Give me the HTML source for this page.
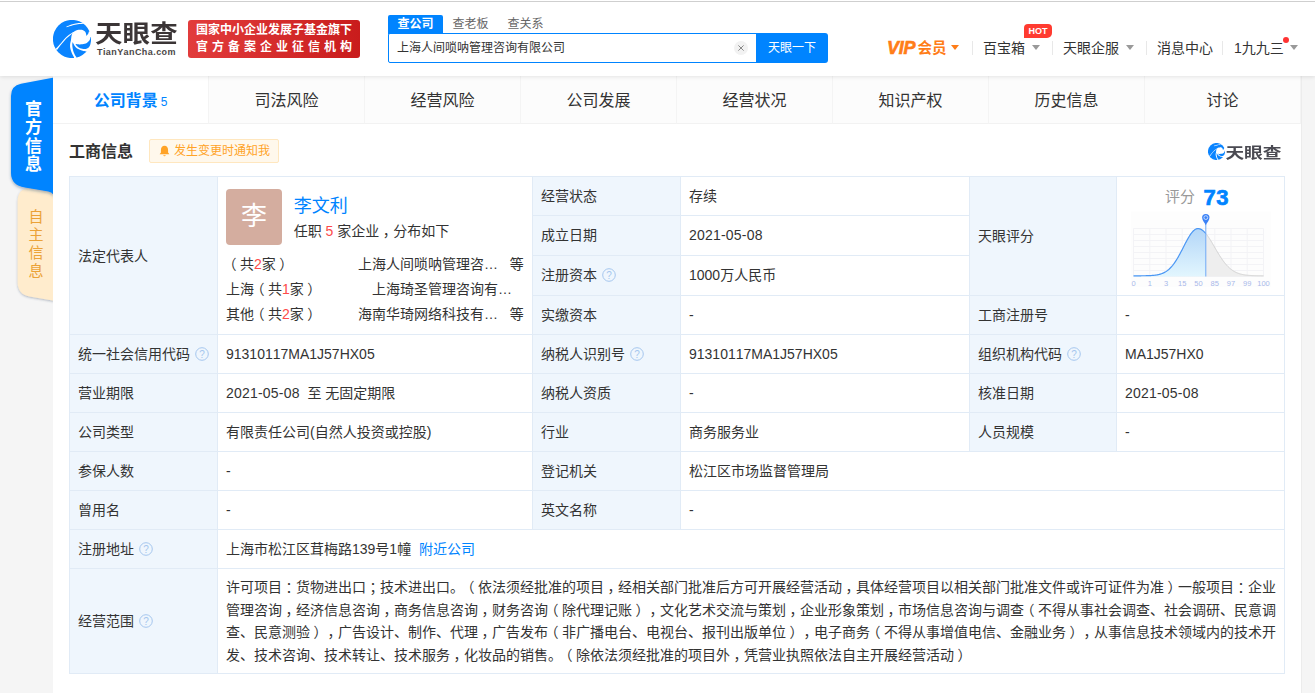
<!DOCTYPE html>
<html lang="zh-CN">
<head>
<meta charset="utf-8">
<title>上海人间唢呐管理咨询有限公司 - 天眼查</title>
<style>
*{box-sizing:border-box;margin:0;padding:0}
html,body{width:1315px;height:693px;overflow:hidden}
body{position:relative;background:#f5f5f5;color:#333;font-family:"Liberation Sans","Noto Sans CJK SC",sans-serif;font-size:14px;line-height:1;text-spacing-trim:space-all;font-kerning:none}
.abs{position:absolute}
#hd{position:absolute;left:0;top:0;width:1315px;height:76px;background:#fff;box-shadow:0 1px 4px rgba(0,0,0,.10);z-index:5}
#topline{position:absolute;left:0;top:1px;width:1315px;height:1px;background:#cfcfcf}
#logo{position:absolute;left:53px;top:20px;width:38px;height:38px}
#logotxt{position:absolute;left:95px;top:18px;font-size:27.5px;font-weight:700;color:#3b3536;letter-spacing:.1px;line-height:32px;transform-origin:0 50%;transform:scale(1,.86);white-space:nowrap}
#logosub{position:absolute;left:97px;top:46.5px;font-size:9px;font-weight:bold;color:#4a4646;letter-spacing:.42px;line-height:10px;white-space:nowrap}
#badge{position:absolute;left:188px;top:20px;width:172px;height:38px;border-radius:3px;background:linear-gradient(90deg,#e23c3c,#c91c1c);color:#fff;font-weight:bold;font-size:12px;line-height:16.5px;padding:2.3px 0 0 8px;white-space:nowrap}
#badge .l2{letter-spacing:4px}
.stab{position:absolute;top:15px;height:19px;width:55px;text-align:center;font-size:12px;line-height:18px;color:#666}
.stab.on{background:#0084ff;color:#fff;font-weight:bold;border-radius:2px 2px 0 0}
#sbox{position:absolute;left:388px;top:33px;width:369px;height:30px;border:1px solid #0084ff;border-radius:2px 0 0 2px;background:#fff;font-size:12px;line-height:29px;padding-left:8px;color:#333}
#sclr{position:absolute;left:734px;top:41px;width:14px;height:14px;border-radius:7px;background:#f2f2f2}
#sbtn{position:absolute;left:756px;top:33px;width:72px;height:30px;background:#0084ff;border-radius:0 3px 3px 0;color:#fff;font-size:12px;line-height:30px;text-align:center}
.nv{position:absolute;top:41px;font-size:14px;line-height:14px;color:#333;white-space:nowrap}
.sep{position:absolute;top:41px;width:1px;height:14px;background:#e8e8e8}
.car{position:absolute;top:45px;width:0;height:0;border-left:4.3px solid transparent;border-right:4.3px solid transparent;border-top:5.2px solid #999}
#side{position:absolute;left:0;top:70px;z-index:6}
.vt{position:absolute;z-index:7;text-align:center;width:18px}
#main{position:absolute;left:53px;top:76px;width:1249px;height:617px;background:#fff;border-right:1px solid #ececec}
.tab{position:absolute;top:0;width:156px;height:48px;background:#fcfcfc;border-bottom:1px solid #f2f2f2;border-right:1px solid #f4f4f4;text-align:center;font-size:16px;line-height:49px;color:#333}
.tab.on{background:#fff;color:#0084ff;font-weight:bold}
.tab.on small{font-size:12px;font-weight:normal;margin-left:3px}
#h2{position:absolute;left:69px;top:142.5px;font-size:16px;font-weight:bold;color:#333;line-height:18px;white-space:nowrap}
#notify{position:absolute;left:149px;top:139px;width:130px;height:24px;border:1px solid #ffe7bf;background:#fff8ec;border-radius:2px;color:#ffa327;font-size:12px;line-height:22px;padding-left:24px;white-space:nowrap}
#slogo{position:absolute;left:1208.3px;top:143.2px;width:17px;height:17px}
#slogotxt{position:absolute;left:1225.4px;top:142.2px;font-size:18.7px;font-weight:700;color:#4a4a52;line-height:22px;white-space:nowrap;transform-origin:0 50%;transform:scale(1,.8)}
.c{position:absolute;border:1px solid #e1ebf6;background:#fff;font-size:14px;line-height:20px;color:#333;padding-left:8px;padding-top:8.7px;display:flex;align-items:flex-start;white-space:nowrap}
.c.m{align-items:center;padding-top:0}
.c.l{background:#eff6fd}
#scope{line-height:22.5px;white-space:nowrap}
.q{display:inline-block;width:14px;height:14px;margin-left:5px;vertical-align:-2px}
.n{letter-spacing:.2px}
.pc{font-feature-settings:"halt" 1;margin:0 3.5px}
.red{color:#fd4a4a}
.blue{color:#0084ff}
#avatar{position:absolute;left:226px;top:189px;width:56px;height:56px;border-radius:4px;background:#d4ad9f;color:#fff;font-size:26px;line-height:54px;text-align:center}
#pname{position:absolute;left:293.7px;top:196px;font-size:18px;line-height:20px;color:#0084ff;white-space:nowrap}
#pdesc{position:absolute;left:293.7px;top:221.7px;font-size:14px;line-height:18px;white-space:nowrap}
.pl,.pr,.pe{position:absolute;font-size:14px;line-height:20px;white-space:nowrap}
.pl{left:226px}
.pr{left:358px}
.pe{left:509.7px}
</style>
</head>
<body>
<div id="main">
<div class="tab on" style="left:0px">公司背景<small>5</small></div>
<div class="tab" style="left:156px">司法风险</div>
<div class="tab" style="left:312px">经营风险</div>
<div class="tab" style="left:468px">公司发展</div>
<div class="tab" style="left:624px">经营状况</div>
<div class="tab" style="left:780px">知识产权</div>
<div class="tab" style="left:936px">历史信息</div>
<div class="tab" style="left:1092px">讨论</div>
</div>
<div id="h2">工商信息</div>
<div id="notify"><svg class="abs" style="left:7.5px;top:4.5px" width="13" height="13" viewBox="0 0 12 12"><path d="M6 .8 C3.9 .8 2.7 2.5 2.7 4.6 L2.7 7 L1.5 8.6 L10.5 8.6 L9.3 7 L9.3 4.6 C9.3 2.5 8.1 .8 6 .8 Z M4.8 9.5 A1.25 1.25 0 0 0 7.2 9.5 Z" fill="#ffa327"/></svg>发生变更时通知我</div>
<svg id="slogo" viewBox="0 0 38 38"><circle cx="19" cy="19" r="19.1" fill="#0a84ff"/>
<path d="M20.2 12.1C20.60 11.87 21.88 11.04 22.60 10.70C23.32 10.36 23.88 10.20 24.50 10.05C25.12 9.90 25.62 9.85 26.30 9.80C26.98 9.75 27.90 9.65 28.60 9.75C29.30 9.85 29.93 10.11 30.50 10.40C31.07 10.69 31.60 11.03 32.00 11.50C32.40 11.97 32.65 12.47 32.90 13.20C33.15 13.93 33.40 15.45 33.50 15.90C33.68 15.68 34.28 15.05 34.60 14.60C34.92 14.15 35.18 13.70 35.40 13.20C35.62 12.70 35.82 11.87 35.90 11.60L40 11L40 17.6L37.6 17C37.48 17.40 37.27 18.63 36.90 19.40C36.53 20.17 35.92 21.02 35.40 21.60C34.88 22.18 34.42 22.53 33.80 22.90C33.18 23.27 32.45 23.57 31.70 23.80C30.95 24.03 30.10 24.15 29.30 24.25C28.50 24.35 27.68 24.38 26.90 24.40C26.12 24.42 25.35 24.40 24.60 24.35C23.85 24.30 22.77 24.14 22.40 24.10C22.57 24.32 23.05 25.00 23.40 25.40C23.75 25.80 24.03 26.10 24.50 26.50C24.97 26.90 25.60 27.45 26.20 27.80C26.80 28.15 27.38 28.38 28.10 28.60C28.82 28.82 29.70 29.05 30.50 29.10C31.30 29.15 32.15 29.08 32.90 28.90C33.65 28.72 34.38 28.40 35.00 28.00C35.62 27.60 36.33 26.75 36.60 26.50L40 27L40 31.6L33.6 31.4C33.07 31.32 31.42 31.12 30.40 30.90C29.38 30.68 28.37 30.40 27.50 30.10C26.63 29.80 25.92 29.50 25.20 29.10C24.48 28.70 23.83 28.30 23.20 27.70C22.57 27.10 22.00 26.43 21.40 25.50C20.80 24.57 19.90 22.67 19.60 22.10C19.55 22.63 19.25 24.07 19.30 25.30C19.35 26.53 19.67 28.35 19.90 29.50C20.13 30.65 20.40 31.38 20.70 32.20C21.00 33.02 21.27 33.60 21.70 34.40C22.13 35.20 23.03 36.57 23.30 37.00L23.6 39.5L21 39.5L21 37.3C20.75 36.85 19.93 35.50 19.50 34.60C19.07 33.70 18.73 32.80 18.40 31.90C18.07 31.00 17.72 30.10 17.50 29.20C17.28 28.30 17.11 27.45 17.06 26.50C17.01 25.55 17.06 24.50 17.20 23.50C17.34 22.50 17.70 21.65 17.90 20.50C18.10 19.35 18.22 17.65 18.40 16.60C18.58 15.55 18.78 14.85 19.00 14.20C19.22 13.55 19.58 12.95 19.70 12.70Z" fill="#fff"/>
<path d="M20.4 11.9C19.87 12.25 18.23 13.27 17.20 14.00C16.17 14.73 15.23 15.40 14.20 16.30C13.17 17.20 12.02 18.30 11.00 19.40C9.98 20.50 9.03 21.80 8.10 22.90C7.17 24.00 6.25 25.08 5.40 26.00C4.55 26.92 3.40 28.00 3.00 28.40L2 30L4.6 29.4C4.93 28.93 5.87 27.57 6.60 26.60C7.33 25.63 8.13 24.67 9.00 23.60C9.87 22.53 10.83 21.25 11.80 20.20C12.77 19.15 13.90 18.13 14.80 17.30C15.70 16.47 16.42 15.83 17.20 15.20C17.98 14.57 19.12 13.78 19.50 13.50Z" fill="#fff"/>
<path d="M13.2 6.75C13.75 6.51 15.28 5.76 16.50 5.30C17.72 4.84 19.17 4.36 20.50 4.00C21.83 3.64 23.42 3.30 24.50 3.15C25.58 3.00 26.15 3.08 27.00 3.10C27.85 3.12 29.17 3.27 29.60 3.30L30.5 2.8L30.5 3.9L29.8 3.9C29.42 4.09 28.33 4.02 27.50 4.05C26.67 4.08 25.72 4.17 24.80 4.30C23.88 4.43 23.22 4.55 22.00 4.85C20.78 5.15 18.92 5.70 17.50 6.10C16.08 6.50 14.17 7.06 13.50 7.25Z" fill="#fff"/></svg>
<div id="slogotxt">天眼查</div>
<div id="tbl">
<div class="c l m" style="left:69px;top:176px;width:149px;height:159px;">法定代表人</div>
<div class="c " style="left:217px;top:176px;width:316px;height:159px;"></div>
<div class="c l" style="left:532px;top:176px;width:149px;height:40px;">经营状态</div>
<div class="c " style="left:680px;top:176px;width:290px;height:40px;">存续</div>
<div class="c l" style="left:532px;top:215px;width:149px;height:41px;">成立日期</div>
<div class="c " style="left:680px;top:215px;width:290px;height:41px;"><span class="n">2021-05-08</span></div>
<div class="c l" style="left:532px;top:255px;width:149px;height:41px;"><span>注册资本<svg class="q" viewBox="0 0 14 14"><circle cx="7" cy="7" r="6.3" fill="none" stroke="#a5c6ee" stroke-width="1"/><text x="7" y="10.6" text-anchor="middle" font-size="10" fill="#a5c6ee" font-family="Liberation Sans,sans-serif">?</text></svg></span></div>
<div class="c " style="left:680px;top:255px;width:290px;height:41px;">1000万人民币</div>
<div class="c l" style="left:532px;top:295px;width:149px;height:40px;">实缴资本</div>
<div class="c " style="left:680px;top:295px;width:290px;height:40px;">-</div>
<div class="c l m" style="left:969px;top:176px;width:148px;height:120px;">天眼评分</div>
<div class="c " style="left:1116px;top:176px;width:169px;height:120px;"></div>
<div class="c l" style="left:969px;top:295px;width:148px;height:40px;">工商注册号</div>
<div class="c " style="left:1116px;top:295px;width:169px;height:40px;">-</div>
<div class="c l" style="left:69px;top:334px;width:149px;height:40px;"><span>统一社会信用代码<svg class="q" viewBox="0 0 14 14"><circle cx="7" cy="7" r="6.3" fill="none" stroke="#a5c6ee" stroke-width="1"/><text x="7" y="10.6" text-anchor="middle" font-size="10" fill="#a5c6ee" font-family="Liberation Sans,sans-serif">?</text></svg></span></div>
<div class="c " style="left:217px;top:334px;width:316px;height:40px;">91310117MA1J57HX05</div>
<div class="c l" style="left:532px;top:334px;width:149px;height:40px;"><span>纳税人识别号<svg class="q" viewBox="0 0 14 14"><circle cx="7" cy="7" r="6.3" fill="none" stroke="#a5c6ee" stroke-width="1"/><text x="7" y="10.6" text-anchor="middle" font-size="10" fill="#a5c6ee" font-family="Liberation Sans,sans-serif">?</text></svg></span></div>
<div class="c " style="left:680px;top:334px;width:290px;height:40px;">91310117MA1J57HX05</div>
<div class="c l" style="left:969px;top:334px;width:148px;height:40px;"><span>组织机构代码<svg class="q" viewBox="0 0 14 14"><circle cx="7" cy="7" r="6.3" fill="none" stroke="#a5c6ee" stroke-width="1"/><text x="7" y="10.6" text-anchor="middle" font-size="10" fill="#a5c6ee" font-family="Liberation Sans,sans-serif">?</text></svg></span></div>
<div class="c " style="left:1116px;top:334px;width:169px;height:40px;">MA1J57HX0</div>
<div class="c l" style="left:69px;top:373px;width:149px;height:40px;">营业期限</div>
<div class="c " style="left:217px;top:373px;width:316px;height:40px;"><span><span class="n">2021-05-08</span>&nbsp; 至 无固定期限</span></div>
<div class="c l" style="left:532px;top:373px;width:149px;height:40px;">纳税人资质</div>
<div class="c " style="left:680px;top:373px;width:290px;height:40px;">-</div>
<div class="c l" style="left:969px;top:373px;width:148px;height:40px;">核准日期</div>
<div class="c " style="left:1116px;top:373px;width:169px;height:40px;"><span class="n">2021-05-08</span></div>
<div class="c l" style="left:69px;top:412px;width:149px;height:40px;">公司类型</div>
<div class="c " style="left:217px;top:412px;width:316px;height:40px;">有限责任公司(自然人投资或控股)</div>
<div class="c l" style="left:532px;top:412px;width:149px;height:40px;">行业</div>
<div class="c " style="left:680px;top:412px;width:290px;height:40px;">商务服务业</div>
<div class="c l" style="left:969px;top:412px;width:148px;height:40px;">人员规模</div>
<div class="c " style="left:1116px;top:412px;width:169px;height:40px;">-</div>
<div class="c l" style="left:69px;top:451px;width:149px;height:40px;">参保人数</div>
<div class="c " style="left:217px;top:451px;width:316px;height:40px;">-</div>
<div class="c l" style="left:532px;top:451px;width:149px;height:40px;">登记机关</div>
<div class="c " style="left:680px;top:451px;width:605px;height:40px;">松江区市场监督管理局</div>
<div class="c l" style="left:69px;top:490px;width:149px;height:40px;">曾用名</div>
<div class="c " style="left:217px;top:490px;width:316px;height:40px;">-</div>
<div class="c l" style="left:532px;top:490px;width:149px;height:40px;">英文名称</div>
<div class="c " style="left:680px;top:490px;width:605px;height:40px;">-</div>
<div class="c l" style="left:69px;top:529px;width:149px;height:40px;"><span>注册地址<svg class="q" viewBox="0 0 14 14"><circle cx="7" cy="7" r="6.3" fill="none" stroke="#a5c6ee" stroke-width="1"/><text x="7" y="10.6" text-anchor="middle" font-size="10" fill="#a5c6ee" font-family="Liberation Sans,sans-serif">?</text></svg></span></div>
<div class="c " style="left:217px;top:529px;width:1068px;height:40px;"><span>上海市松江区茸梅路139号1幢&nbsp; <span class="blue">附近公司</span></span></div>
<div class="c l m" style="left:69px;top:568px;width:149px;height:106px;"><span>经营范围<svg class="q" viewBox="0 0 14 14"><circle cx="7" cy="7" r="6.3" fill="none" stroke="#a5c6ee" stroke-width="1"/><text x="7" y="10.6" text-anchor="middle" font-size="10" fill="#a5c6ee" font-family="Liberation Sans,sans-serif">?</text></svg></span></div>
<div class="c m" style="left:217px;top:568px;width:1068px;height:106px;"><div id="scope">许可项目<span class="pc">：</span>货物进出口<span class="pc">；</span>技术进出口。<span class="pc">（</span>依法须经批准的项目<span class="pc">，</span>经相关部门批准后方可开展经营活动<span class="pc">，</span>具体经营项目以相关部门批准文件或许可证件为准<span class="pc">）</span>一般项目<span class="pc">：</span>企业<br>管理咨询<span class="pc">，</span>经济信息咨询<span class="pc">，</span>商务信息咨询<span class="pc">，</span>财务咨询<span class="pc">（</span>除代理记账<span class="pc">）</span><span class="pc">，</span>文化艺术交流与策划<span class="pc">，</span>企业形象策划<span class="pc">，</span>市场信息咨询与调查<span class="pc">（</span>不得从事社会调查、社会调研、民意调<br>查、民意测验<span class="pc">）</span><span class="pc">，</span>广告设计、制作、代理<span class="pc">，</span>广告发布<span class="pc">（</span>非广播电台、电视台、报刊出版单位<span class="pc">）</span><span class="pc">，</span>电子商务<span class="pc">（</span>不得从事增值电信、金融业务<span class="pc">）</span><span class="pc">，</span>从事信息技术领域内的技术开<br>发、技术咨询、技术转让、技术服务<span class="pc">，</span>化妆品的销售。<span class="pc">（</span>除依法须经批准的项目外<span class="pc">，</span>凭营业执照依法自主开展经营活动<span class="pc">）</span></div></div>
<div id="avatar">李</div>
<div id="pname">李文利</div>
<div id="pdesc">任职 <span class="red">5</span> 家企业<span class="pc">，</span>分布如下</div>
<div class="pl" style="top:254.3px"><span class="pc">（</span>共<span class="red">2</span>家<span class="pc">）</span></div><div class="pr" style="top:254.3px">上海人间唢呐管理咨…</div><div class="pe" style="top:254.3px">等</div>
<div class="pl" style="top:279px">上海<span class="pc">（</span>共<span class="red">1</span>家<span class="pc">）</span></div><div class="pr" style="top:279px;left:372px">上海琦圣管理咨询有…</div>
<div class="pl" style="top:304px">其他<span class="pc">（</span>共<span class="red">2</span>家<span class="pc">）</span></div><div class="pr" style="top:304px">海南华琦网络科技有…</div><div class="pe" style="top:304px">等</div>
<svg class="abs" style="left:1120px;top:200px" width="165" height="95" viewBox="0 0 165 95">
<defs><linearGradient id="cg" x1="0" y1="0" x2="0" y2="1"><stop offset="0" stop-color="#b3d6f8"/><stop offset="1" stop-color="#e2f6fe"/></linearGradient></defs>
<rect x="11" y="11.5" width="140" height="75.5" fill="#fdfdfd"/>
<path d="M13.5 28.5V76.5M29.75 28.5V76.5M46.0 28.5V76.5M62.25 28.5V76.5M78.5 28.5V76.5M94.75 28.5V76.5M111.0 28.5V76.5M127.25 28.5V76.5M143.5 28.5V76.5M13.5 28.5H143.5M13.5 34.5H143.5M13.5 40.5H143.5M13.5 46.5H143.5M13.5 52.5H143.5M13.5 58.5H143.5M13.5 64.5H143.5M13.5 70.5H143.5M13.5 76.5H143.5" stroke="#f3f3f6" stroke-width="1" fill="none"/>
<polygon points="85.8,33.53 86.0,33.77 86.5,34.4 87.0,35.05 87.5,35.73 88.0,36.43 88.5,37.16 89.0,37.9 89.5,38.67 90.0,39.45 90.5,40.25 91.0,41.07 91.5,41.89 92.0,42.73 92.5,43.57 93.0,44.42 93.5,45.28 94.0,46.14 94.5,47.0 95.0,47.86 95.5,48.72 96.0,49.58 96.5,50.43 97.0,51.28 97.5,52.12 98.0,52.96 98.5,53.78 99.0,54.6 99.5,55.4 100.0,56.19 100.5,56.96 101.0,57.72 101.5,58.47 102.0,59.2 102.5,59.92 103.0,60.61 103.5,61.29 104.0,61.96 104.5,62.6 105.0,63.23 105.5,63.83 106.0,64.42 106.5,64.99 107.0,65.54 107.5,66.07 108.0,66.58 108.5,67.07 109.0,67.55 109.5,68.0 110.0,68.44 110.5,68.86 111.0,69.26 111.5,69.64 112.0,70.01 112.5,70.35 113.0,70.69 113.5,71.0 114.0,71.31 114.5,71.59 115.0,71.86 115.5,72.12 116.0,72.36 116.5,72.59 117.0,72.81 117.5,73.02 118.0,73.21 118.5,73.39 119.0,73.56 119.5,73.73 120.0,73.88 120.5,74.02 121.0,74.15 121.5,74.28 122.0,74.39 122.5,74.5 123.0,74.6 123.5,74.7 124.0,74.78 124.5,74.87 125.0,74.94 125.5,75.01 126.0,75.08 126.5,75.14 127.0,75.19 127.5,75.25 128.0,75.29 128.5,75.34 129.0,75.38 129.5,75.42 130.0,75.45 130.5,75.48 131.0,75.51 131.5,75.54 132.0,75.56 132.5,75.58 133.0,75.6 133.5,75.62 134.0,75.64 134.5,75.66 135.0,75.67 135.5,75.68 136.0,75.69 136.5,75.71 137.0,75.71 137.5,75.72 138.0,75.73 138.5,75.74 139.0,75.74 139.5,75.75 140.0,75.76 140.5,75.76 141.0,75.76 141.5,75.77 142.0,75.77 142.5,75.78 143.0,75.78 143.5,75.78 143.5,76.5 85.8,76.5" fill="#eeeeee"/>
<polyline points="85.8,33.53 86.0,33.77 86.5,34.4 87.0,35.05 87.5,35.73 88.0,36.43 88.5,37.16 89.0,37.9 89.5,38.67 90.0,39.45 90.5,40.25 91.0,41.07 91.5,41.89 92.0,42.73 92.5,43.57 93.0,44.42 93.5,45.28 94.0,46.14 94.5,47.0 95.0,47.86 95.5,48.72 96.0,49.58 96.5,50.43 97.0,51.28 97.5,52.12 98.0,52.96 98.5,53.78 99.0,54.6 99.5,55.4 100.0,56.19 100.5,56.96 101.0,57.72 101.5,58.47 102.0,59.2 102.5,59.92 103.0,60.61 103.5,61.29 104.0,61.96 104.5,62.6 105.0,63.23 105.5,63.83 106.0,64.42 106.5,64.99 107.0,65.54 107.5,66.07 108.0,66.58 108.5,67.07 109.0,67.55 109.5,68.0 110.0,68.44 110.5,68.86 111.0,69.26 111.5,69.64 112.0,70.01 112.5,70.35 113.0,70.69 113.5,71.0 114.0,71.31 114.5,71.59 115.0,71.86 115.5,72.12 116.0,72.36 116.5,72.59 117.0,72.81 117.5,73.02 118.0,73.21 118.5,73.39 119.0,73.56 119.5,73.73 120.0,73.88 120.5,74.02 121.0,74.15 121.5,74.28 122.0,74.39 122.5,74.5 123.0,74.6 123.5,74.7 124.0,74.78 124.5,74.87 125.0,74.94 125.5,75.01 126.0,75.08 126.5,75.14 127.0,75.19 127.5,75.25 128.0,75.29 128.5,75.34 129.0,75.38 129.5,75.42 130.0,75.45 130.5,75.48 131.0,75.51 131.5,75.54 132.0,75.56 132.5,75.58 133.0,75.6 133.5,75.62 134.0,75.64 134.5,75.66 135.0,75.67 135.5,75.68 136.0,75.69 136.5,75.71 137.0,75.71 137.5,75.72 138.0,75.73 138.5,75.74 139.0,75.74 139.5,75.75 140.0,75.76 140.5,75.76 141.0,75.76 141.5,75.77 142.0,75.77 142.5,75.78 143.0,75.78 143.5,75.78" fill="none" stroke="#d2d2d2" stroke-width="1"/>
<polygon points="13.5,75.8 14.0,75.8 14.5,75.8 15.0,75.8 15.5,75.8 16.0,75.79 16.5,75.79 17.0,75.79 17.5,75.79 18.0,75.79 18.5,75.79 19.0,75.79 19.5,75.78 20.0,75.78 20.5,75.78 21.0,75.78 21.5,75.77 22.0,75.77 22.5,75.77 23.0,75.76 23.5,75.76 24.0,75.75 24.5,75.74 25.0,75.74 25.5,75.73 26.0,75.72 26.5,75.71 27.0,75.69 27.5,75.68 28.0,75.67 28.5,75.65 29.0,75.63 29.5,75.61 30.0,75.59 30.5,75.56 31.0,75.53 31.5,75.5 32.0,75.47 32.5,75.43 33.0,75.39 33.5,75.35 34.0,75.3 34.5,75.24 35.0,75.18 35.5,75.12 36.0,75.05 36.5,74.97 37.0,74.88 37.5,74.79 38.0,74.69 38.5,74.59 39.0,74.47 39.5,74.34 40.0,74.2 40.5,74.06 41.0,73.9 41.5,73.73 42.0,73.54 42.5,73.34 43.0,73.13 43.5,72.91 44.0,72.66 44.5,72.41 45.0,72.13 45.5,71.84 46.0,71.53 46.5,71.2 47.0,70.85 47.5,70.48 48.0,70.08 48.5,69.67 49.0,69.24 49.5,68.78 50.0,68.3 50.5,67.79 51.0,67.26 51.5,66.71 52.0,66.13 52.5,65.53 53.0,64.9 53.5,64.25 54.0,63.58 54.5,62.88 55.0,62.15 55.5,61.4 56.0,60.63 56.5,59.84 57.0,59.02 57.5,58.19 58.0,57.33 58.5,56.45 59.0,55.56 59.5,54.65 60.0,53.73 60.5,52.79 61.0,51.84 61.5,50.88 62.0,49.91 62.5,48.93 63.0,47.96 63.5,46.98 64.0,46.0 64.5,45.02 65.0,44.05 65.5,43.08 66.0,42.13 66.5,41.19 67.0,40.26 67.5,39.36 68.0,38.47 68.5,37.61 69.0,36.77 69.5,35.96 70.0,35.18 70.5,34.43 71.0,33.72 71.5,33.05 72.0,32.42 72.5,31.83 73.0,31.29 73.5,30.79 74.0,30.34 74.5,29.94 75.0,29.59 75.5,29.29 76.0,29.04 76.5,28.85 77.0,28.71 77.5,28.63 78.0,28.6 78.5,28.62 79.0,28.69 79.5,28.79 80.0,28.94 80.5,29.13 81.0,29.36 81.5,29.64 82.0,29.95 82.5,30.3 83.0,30.69 83.5,31.12 84.0,31.58 84.5,32.08 85.0,32.62 85.5,33.18 85.8,33.53 85.8,76.5 13.5,76.5" fill="url(#cg)"/>
<polyline points="13.5,75.8 14.0,75.8 14.5,75.8 15.0,75.8 15.5,75.8 16.0,75.79 16.5,75.79 17.0,75.79 17.5,75.79 18.0,75.79 18.5,75.79 19.0,75.79 19.5,75.78 20.0,75.78 20.5,75.78 21.0,75.78 21.5,75.77 22.0,75.77 22.5,75.77 23.0,75.76 23.5,75.76 24.0,75.75 24.5,75.74 25.0,75.74 25.5,75.73 26.0,75.72 26.5,75.71 27.0,75.69 27.5,75.68 28.0,75.67 28.5,75.65 29.0,75.63 29.5,75.61 30.0,75.59 30.5,75.56 31.0,75.53 31.5,75.5 32.0,75.47 32.5,75.43 33.0,75.39 33.5,75.35 34.0,75.3 34.5,75.24 35.0,75.18 35.5,75.12 36.0,75.05 36.5,74.97 37.0,74.88 37.5,74.79 38.0,74.69 38.5,74.59 39.0,74.47 39.5,74.34 40.0,74.2 40.5,74.06 41.0,73.9 41.5,73.73 42.0,73.54 42.5,73.34 43.0,73.13 43.5,72.91 44.0,72.66 44.5,72.41 45.0,72.13 45.5,71.84 46.0,71.53 46.5,71.2 47.0,70.85 47.5,70.48 48.0,70.08 48.5,69.67 49.0,69.24 49.5,68.78 50.0,68.3 50.5,67.79 51.0,67.26 51.5,66.71 52.0,66.13 52.5,65.53 53.0,64.9 53.5,64.25 54.0,63.58 54.5,62.88 55.0,62.15 55.5,61.4 56.0,60.63 56.5,59.84 57.0,59.02 57.5,58.19 58.0,57.33 58.5,56.45 59.0,55.56 59.5,54.65 60.0,53.73 60.5,52.79 61.0,51.84 61.5,50.88 62.0,49.91 62.5,48.93 63.0,47.96 63.5,46.98 64.0,46.0 64.5,45.02 65.0,44.05 65.5,43.08 66.0,42.13 66.5,41.19 67.0,40.26 67.5,39.36 68.0,38.47 68.5,37.61 69.0,36.77 69.5,35.96 70.0,35.18 70.5,34.43 71.0,33.72 71.5,33.05 72.0,32.42 72.5,31.83 73.0,31.29 73.5,30.79 74.0,30.34 74.5,29.94 75.0,29.59 75.5,29.29 76.0,29.04 76.5,28.85 77.0,28.71 77.5,28.63 78.0,28.6 78.5,28.62 79.0,28.69 79.5,28.79 80.0,28.94 80.5,29.13 81.0,29.36 81.5,29.64 82.0,29.95 82.5,30.3 83.0,30.69 83.5,31.12 84.0,31.58 84.5,32.08 85.0,32.62 85.5,33.18 85.8,33.53" fill="none" stroke="#4b97f4" stroke-width="1.2"/>
<path d="M85.8 24V76.5" stroke="#6ea9f6" stroke-width="1"/>
<path d="M85.8 25.2 C84.6 22.6 82.1 20.6 82.1 17.6 A3.7 3.7 0 1 1 89.5 17.6 C89.5 20.6 87.0 22.6 85.8 25.2Z" fill="#3c82f6"/>
<circle cx="85.8" cy="17.6" r="1.9" fill="none" stroke="#cfe3fd" stroke-width=".9"/>
<text x="13.5" y="86" text-anchor="middle" font-size="7.5" fill="#a9b9ea" font-family="Liberation Sans,sans-serif">0</text><text x="29.75" y="86" text-anchor="middle" font-size="7.5" fill="#a9b9ea" font-family="Liberation Sans,sans-serif">1</text><text x="46.0" y="86" text-anchor="middle" font-size="7.5" fill="#a9b9ea" font-family="Liberation Sans,sans-serif">3</text><text x="62.25" y="86" text-anchor="middle" font-size="7.5" fill="#a9b9ea" font-family="Liberation Sans,sans-serif">15</text><text x="78.5" y="86" text-anchor="middle" font-size="7.5" fill="#a9b9ea" font-family="Liberation Sans,sans-serif">50</text><text x="94.75" y="86" text-anchor="middle" font-size="7.5" fill="#a9b9ea" font-family="Liberation Sans,sans-serif">85</text><text x="111.0" y="86" text-anchor="middle" font-size="7.5" fill="#a9b9ea" font-family="Liberation Sans,sans-serif">97</text><text x="127.25" y="86" text-anchor="middle" font-size="7.5" fill="#a9b9ea" font-family="Liberation Sans,sans-serif">99</text><text x="143.5" y="86" text-anchor="middle" font-size="7.5" fill="#a9b9ea" font-family="Liberation Sans,sans-serif">100</text>
</svg>
<div class="abs" style="left:1165px;top:188px;font-size:15px;line-height:18px;color:#999;white-space:nowrap">评分</div>
<div class="abs" style="left:1203.5px;top:186px;font-size:22px;font-weight:bold;line-height:24px;color:#0084ff;white-space:nowrap;-webkit-text-stroke:.7px #0084ff;letter-spacing:.4px">73</div>
</div>
<svg id="side" width="60" height="250" viewBox="0 0 60 250">
<defs><filter id="sh1" x="-30%" y="-10%" width="160%" height="130%"><feDropShadow dx="0" dy="1" stdDeviation="1.2" flood-color="#42506a" flood-opacity=".38"/></filter>
<filter id="sh2" x="-30%" y="-10%" width="160%" height="130%"><feDropShadow dx="0" dy="1.5" stdDeviation="1.6" flood-color="#1b3c6e" flood-opacity=".4"/></filter>
<clipPath id="sclip"><rect x="0" y="0" width="53" height="250"/></clipPath></defs>
<g clip-path="url(#sclip)">
<path d="M53 118 L30 118 Q17.6 118 17.6 132 L17.6 212 Q17.6 224.2 29.5 226.6 L54 230.8 Z" fill="#ffeccd" filter="url(#sh1)"/>
<path d="M54 7.4 L21 13.8 Q11 15.8 11 26 L11 103 Q11 115.2 25 117.6 L48.5 121.6 Q52 122.3 54 125.6 Z" fill="#0084ff" filter="url(#sh2)"/>
</g>
</svg>
<div class="vt" style="left:24.5px;top:101px;color:#fff;font-weight:bold;font-size:17px;line-height:18.4px">官<br>方<br>信<br>息</div>
<div class="vt" style="left:27px;top:208px;color:#eba237;font-size:15px;line-height:18.1px">自<br>主<br>信<br>息</div>

<div id="hd">
<div id="topline"></div>
<svg id="logo" viewBox="0 0 38 38">
<circle cx="19" cy="19" r="19.1" fill="#0a84ff"/>
<path d="M20.2 12.1C20.60 11.87 21.88 11.04 22.60 10.70C23.32 10.36 23.88 10.20 24.50 10.05C25.12 9.90 25.62 9.85 26.30 9.80C26.98 9.75 27.90 9.65 28.60 9.75C29.30 9.85 29.93 10.11 30.50 10.40C31.07 10.69 31.60 11.03 32.00 11.50C32.40 11.97 32.65 12.47 32.90 13.20C33.15 13.93 33.40 15.45 33.50 15.90C33.68 15.68 34.28 15.05 34.60 14.60C34.92 14.15 35.18 13.70 35.40 13.20C35.62 12.70 35.82 11.87 35.90 11.60L40 11L40 17.6L37.6 17C37.48 17.40 37.27 18.63 36.90 19.40C36.53 20.17 35.92 21.02 35.40 21.60C34.88 22.18 34.42 22.53 33.80 22.90C33.18 23.27 32.45 23.57 31.70 23.80C30.95 24.03 30.10 24.15 29.30 24.25C28.50 24.35 27.68 24.38 26.90 24.40C26.12 24.42 25.35 24.40 24.60 24.35C23.85 24.30 22.77 24.14 22.40 24.10C22.57 24.32 23.05 25.00 23.40 25.40C23.75 25.80 24.03 26.10 24.50 26.50C24.97 26.90 25.60 27.45 26.20 27.80C26.80 28.15 27.38 28.38 28.10 28.60C28.82 28.82 29.70 29.05 30.50 29.10C31.30 29.15 32.15 29.08 32.90 28.90C33.65 28.72 34.38 28.40 35.00 28.00C35.62 27.60 36.33 26.75 36.60 26.50L40 27L40 31.6L33.6 31.4C33.07 31.32 31.42 31.12 30.40 30.90C29.38 30.68 28.37 30.40 27.50 30.10C26.63 29.80 25.92 29.50 25.20 29.10C24.48 28.70 23.83 28.30 23.20 27.70C22.57 27.10 22.00 26.43 21.40 25.50C20.80 24.57 19.90 22.67 19.60 22.10C19.55 22.63 19.25 24.07 19.30 25.30C19.35 26.53 19.67 28.35 19.90 29.50C20.13 30.65 20.40 31.38 20.70 32.20C21.00 33.02 21.27 33.60 21.70 34.40C22.13 35.20 23.03 36.57 23.30 37.00L23.6 39.5L21 39.5L21 37.3C20.75 36.85 19.93 35.50 19.50 34.60C19.07 33.70 18.73 32.80 18.40 31.90C18.07 31.00 17.72 30.10 17.50 29.20C17.28 28.30 17.11 27.45 17.06 26.50C17.01 25.55 17.06 24.50 17.20 23.50C17.34 22.50 17.70 21.65 17.90 20.50C18.10 19.35 18.22 17.65 18.40 16.60C18.58 15.55 18.78 14.85 19.00 14.20C19.22 13.55 19.58 12.95 19.70 12.70Z" fill="#fff"/>
<path d="M20.4 11.9C19.87 12.25 18.23 13.27 17.20 14.00C16.17 14.73 15.23 15.40 14.20 16.30C13.17 17.20 12.02 18.30 11.00 19.40C9.98 20.50 9.03 21.80 8.10 22.90C7.17 24.00 6.25 25.08 5.40 26.00C4.55 26.92 3.40 28.00 3.00 28.40L2 30L4.6 29.4C4.93 28.93 5.87 27.57 6.60 26.60C7.33 25.63 8.13 24.67 9.00 23.60C9.87 22.53 10.83 21.25 11.80 20.20C12.77 19.15 13.90 18.13 14.80 17.30C15.70 16.47 16.42 15.83 17.20 15.20C17.98 14.57 19.12 13.78 19.50 13.50Z" fill="#fff"/>
<path d="M13.2 6.75C13.75 6.51 15.28 5.76 16.50 5.30C17.72 4.84 19.17 4.36 20.50 4.00C21.83 3.64 23.42 3.30 24.50 3.15C25.58 3.00 26.15 3.08 27.00 3.10C27.85 3.12 29.17 3.27 29.60 3.30L30.5 2.8L30.5 3.9L29.8 3.9C29.42 4.09 28.33 4.02 27.50 4.05C26.67 4.08 25.72 4.17 24.80 4.30C23.88 4.43 23.22 4.55 22.00 4.85C20.78 5.15 18.92 5.70 17.50 6.10C16.08 6.50 14.17 7.06 13.50 7.25Z" fill="#fff"/>
</svg>
<div id="logotxt">天眼查</div>
<div id="logosub">TianYanCha.com</div>
<div id="badge">国家中小企业发展子基金旗下<br><span class="l2">官方备案企业征信机构</span></div>
<div class="stab on" style="left:388px">查公司</div>
<div class="stab" style="left:443px">查老板</div>
<div class="stab" style="left:498px">查关系</div>
<div id="sbox">上海人间唢呐管理咨询有限公司</div>
<div id="sclr"><svg width="14" height="14" viewBox="0 0 14 14"><path d="M4.4 4.4 L9.6 9.6 M9.6 4.4 L4.4 9.6" stroke="#888" stroke-width="1" fill="none"/></svg></div>
<div id="sbtn">天眼一下</div>
<div class="nv" style="left:887px;top:38.5px;color:#ff7d18;font-weight:bold;font-size:18px;line-height:19px;-webkit-text-stroke:.6px #ff7d18;letter-spacing:-.3px"><i>VIP</i></div>
<div class="nv" style="left:917.5px;top:40.5px;color:#ff7d18;font-weight:bold;font-size:14.5px">会员</div>
<div class="car" style="left:951px;border-top-color:#ff7d18"></div>
<div class="sep" style="left:972px"></div>
<div class="nv" style="left:983px">百宝箱</div>
<div class="car" style="left:1032px"></div>
<div id="hot" class="abs" style="left:1024px;top:24px;width:28px;height:14px;background:#ff3b30;border-radius:4px 4px 5px 0;color:#fff;font-size:9px;font-weight:bold;line-height:14px;text-align:center">HOT</div>
<div class="sep" style="left:1052px"></div>
<div class="nv" style="left:1063px">天眼企服</div>
<div class="car" style="left:1126px"></div>
<div class="sep" style="left:1146px"></div>
<div class="nv" style="left:1157px">消息中心</div>
<div class="sep" style="left:1222px"></div>
<div class="nv" style="left:1234px">1九九三</div>
<div class="abs" style="left:1283px;top:37px;width:6px;height:6px;border-radius:3px;background:#ff3333"></div>
<div class="car" style="left:1290px"></div>
</div>
</body>
</html>
